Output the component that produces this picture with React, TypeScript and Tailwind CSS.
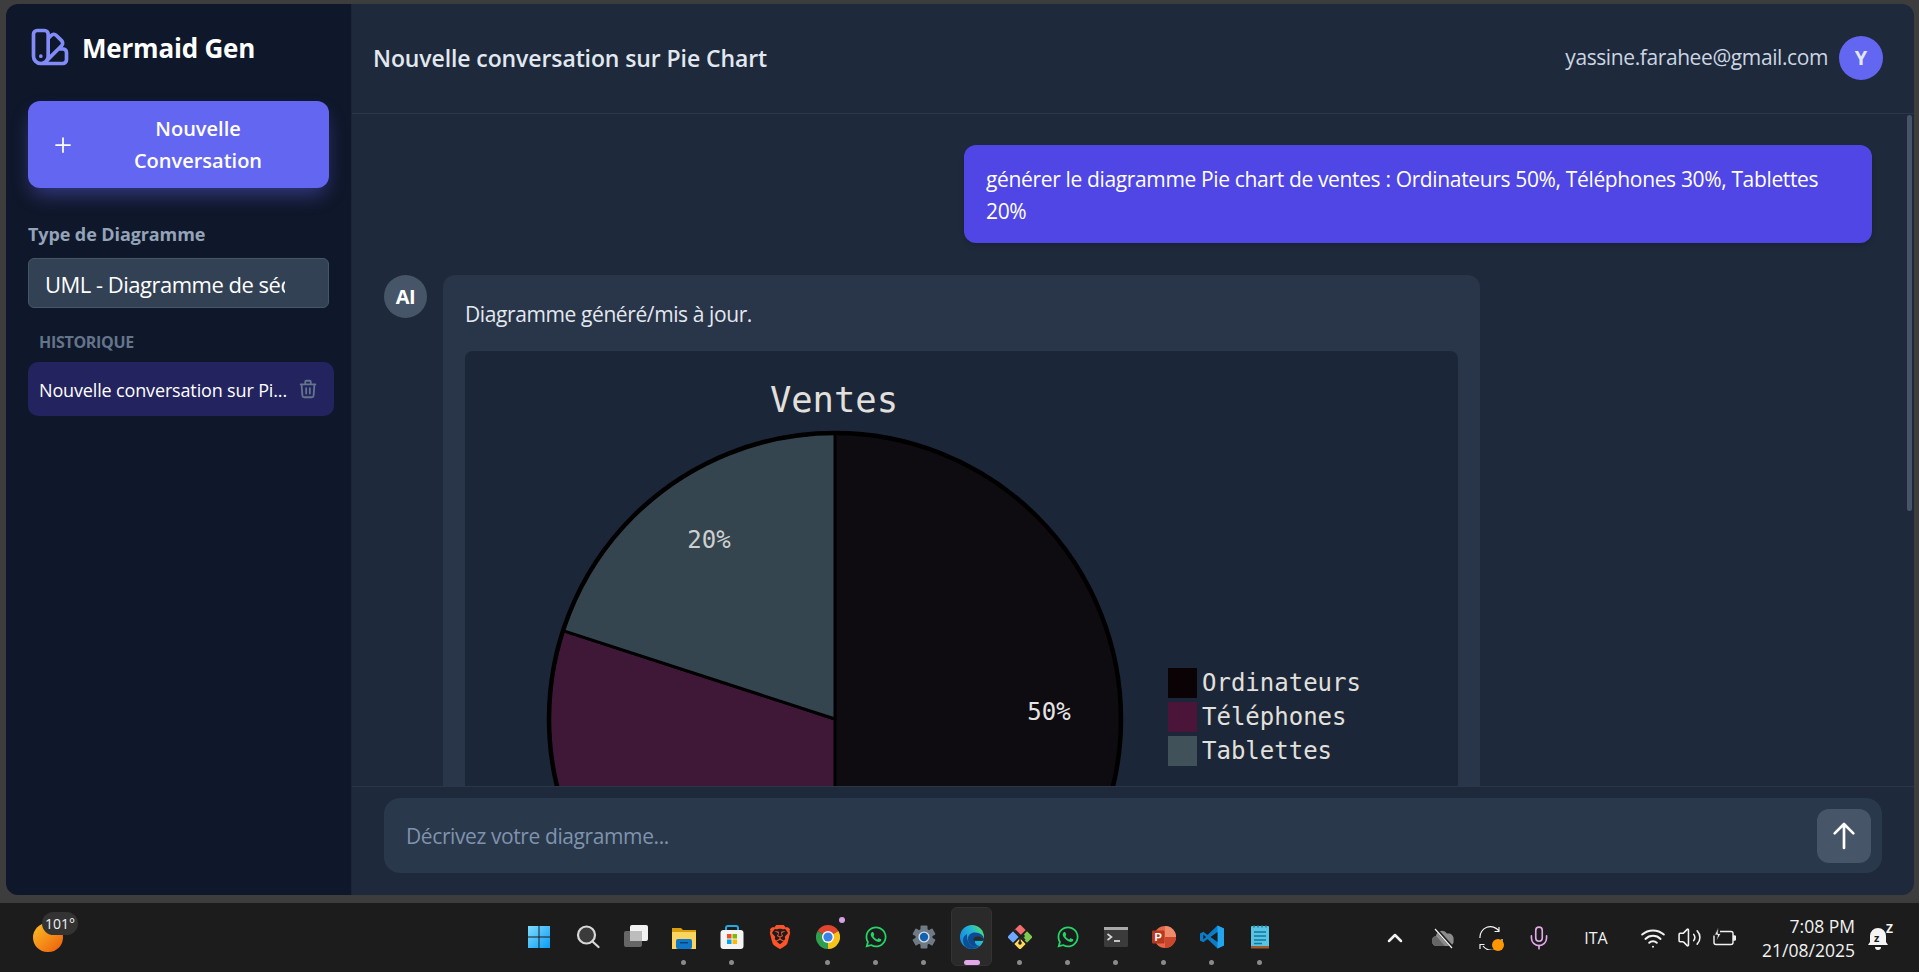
import { ChevronUp, Mic, Plus, Volume2, Wifi } from "lucide-react";
import { FaWhatsapp } from "react-icons/fa";
import { SiBrave } from "react-icons/si";

function Swatch() {
  return (
    <svg viewBox="0 0 24 24" fill="none" stroke="#818cf8" strokeWidth="2" strokeLinecap="round" strokeLinejoin="round" className="w-11 h-11 shrink-0">
      <path d="M7 21a4 4 0 01-4-4V5a2 2 0 012-2h4a2 2 0 012 2v12a4 4 0 01-4 4zm0 0h12a2 2 0 002-2v-4a2 2 0 00-2-2h-2.343M11 7.343l1.657-1.657a2 2 0 012.828 0l2.829 2.829a2 2 0 010 2.828l-8.486 8.486M7 17h.01" />
    </svg>
  );
}

function Trash() {
  return (
    <svg viewBox="0 0 24 24" fill="none" stroke="#64748b" strokeWidth="2" strokeLinecap="round" strokeLinejoin="round" className="w-[22px] h-[22px] shrink-0">
      <path d="M19 7l-.867 12.142A2 2 0 0116.138 21H7.862a2 2 0 01-1.995-1.858L5 7m5 4v6m4-6v6m1-10V4a1 1 0 00-1-1h-4a1 1 0 00-1 1v3M4 7h16" />
    </svg>
  );
}

function PieChart() {
  const cx = 370;
  const cy = 368;
  const r = 286;
  const ex = cx - r * 0.951;
  const ey = cy - r * 0.309;
  const bx = cx - r * 0.951;
  const by = cy + r * 0.309;
  return (
    <svg viewBox="0 0 993 720" className="block w-[993px] h-[720px]">
      <text x="369" y="61" textAnchor="middle" fontFamily="DejaVu Sans Mono" fontSize="35.5" fill="#e2e0dc">Ventes</text>
      <path d={`M${cx} ${cy}L${cx} ${cy - r}A${r} ${r} 0 0 1 ${cx} ${cy + r}Z`} fill="#0e0b11" stroke="#000" strokeWidth="2" />
      <path d={`M${cx} ${cy}L${cx} ${cy + r}A${r} ${r} 0 0 1 ${bx} ${by}A${r} ${r} 0 0 1 ${ex} ${ey}Z`} fill="#3e1836" stroke="#000" strokeWidth="3" />
      <path d={`M${cx} ${cy}L${ex} ${ey}A${r} ${r} 0 0 1 ${cx} ${cy - r}Z`} fill="#34454f" stroke="#000" strokeWidth="3" />
      <circle cx={cx} cy={cy} r={r} fill="none" stroke="#000" strokeWidth="4.5" />
      <text x="244" y="197" textAnchor="middle" fontFamily="DejaVu Sans Mono" fontSize="24" fill="#cfcfcf">20%</text>
      <text x="584" y="369" textAnchor="middle" fontFamily="DejaVu Sans Mono" fontSize="24" fill="#e4e4e4">50%</text>
      <rect x="703" y="317" width="29" height="30" fill="#0b0206" />
      <rect x="703" y="351" width="29" height="30" fill="#4a1539" />
      <rect x="703" y="385" width="29" height="30" fill="#405159" />
      <text x="737" y="340" fontFamily="DejaVu Sans Mono" fontSize="24" fill="#e2e0dc">Ordinateurs</text>
      <text x="737" y="374" fontFamily="DejaVu Sans Mono" fontSize="24" fill="#e2e0dc">Téléphones</text>
      <text x="737" y="408" fontFamily="DejaVu Sans Mono" fontSize="24" fill="#e2e0dc">Tablettes</text>
    </svg>
  );
}

function WinIcon() {
  return (
    <svg viewBox="0 0 24 24" className="w-6 h-6 -ml-[3px]">
      <defs>
        <linearGradient id="win" x1="0" y1="0" x2="1" y2="1">
          <stop offset="0" stopColor="#7fdcff" />
          <stop offset="1" stopColor="#0a9cf5" />
        </linearGradient>
      </defs>
      <path d="M1 1h10.500v10.500H1zM12.500 1H23v10.500H12.500zM1 12.500h10.500V23H1zM12.500 12.500H23V23H12.500z" fill="url(#win)" />
    </svg>
  );
}

function SearchIcon() {
  return (
    <svg viewBox="0 0 24 24" className="w-6 h-6" fill="#3b3b3b" stroke="#d8d8d8" strokeWidth="2.2" strokeLinecap="round">
      <circle cx="10.500" cy="10" r="8.500" />
      <path d="M16.500 16.500l6 5.500" />
    </svg>
  );
}

function TaskViewIcon() {
  return (
    <svg viewBox="0 0 24 24" className="w-6 h-6">
      <rect x="0" y="6" width="18" height="16" rx="2" fill="#666" />
      <rect x="6" y="0" width="18" height="16" rx="2" fill="#f2f2f2" />
      <rect x="6" y="6" width="12" height="10" fill="#bdbdbd" />
    </svg>
  );
}

function ExplorerIcon() {
  return (
    <svg viewBox="0 0 24 24" className="w-6 h-6">
      <path d="M0 3h9l2 2h13v19H0z" fill="#d99f0e" />
      <path d="M0 7h24v17H0z" fill="#fbd35f" />
      <rect x="4" y="14" width="16" height="10" rx="2" fill="#0f77c8" />
      <rect x="8" y="17" width="8" height="1.400" fill="#063f70" />
    </svg>
  );
}

function StoreIcon() {
  return (
    <svg viewBox="0 0 24 24" className="w-6 h-6">
      <path d="M6 6V3a2 2 0 012-2h8a2 2 0 012 2v3" fill="none" stroke="#22a8e6" strokeWidth="2" />
      <rect x="0.500" y="5" width="23" height="19" rx="3" fill="#f4f4f4" />
      <rect x="7" y="9" width="4.500" height="4.500" fill="#f25022" />
      <rect x="12.500" y="9" width="4.500" height="4.500" fill="#7fba00" />
      <rect x="7" y="14.500" width="4.500" height="4.500" fill="#00a4ef" />
      <rect x="12.500" y="14.500" width="4.500" height="4.500" fill="#ffb900" />
    </svg>
  );
}

function ChromeIcon() {
  return (
    <svg viewBox="0 0 24 24" className="w-6 h-6">
      <path d="M12 12L1.600 6A12 12 0 0122.400 6Z" fill="#e0452f" />
      <path d="M12 12L22.400 6A12 12 0 0112 24Z" fill="#f6c31c" />
      <path d="M12 12L12 24A12 12 0 011.600 6Z" fill="#2f9e4f" />
      <circle cx="12" cy="12" r="6" fill="#fff" />
      <circle cx="12" cy="12" r="4.600" fill="#3b82e8" />
    </svg>
  );
}

function GearIcon() {
  return (
    <svg viewBox="0 0 24 24" className="w-6 h-6">
      {[0, 60, 120, 180, 240, 300].map((a) => (
        <rect key={a} x="8.500" y="0.500" width="7" height="6" rx="1" fill="#6f7a85" transform={`rotate(${a} 12 12)`} />
      ))}
      <circle cx="12" cy="12" r="8.500" fill="#6f7a85" />
      <circle cx="12" cy="12" r="5.600" fill="#d6dde3" />
      <circle cx="12" cy="12" r="4.200" fill="#1262b3" />
    </svg>
  );
}

function EdgeIcon() {
  return (
    <svg viewBox="0 0 24 24" className="w-6 h-6">
      <defs>
        <linearGradient id="edge" x1="0.100" y1="0.600" x2="0.900" y2="0.100">
          <stop offset="0" stopColor="#1a8fdc" />
          <stop offset="0.550" stopColor="#22b4d8" />
          <stop offset="1" stopColor="#52dc6c" />
        </linearGradient>
      </defs>
      <circle cx="12" cy="12" r="12" fill="url(#edge)" />
      <path d="M7 11c0 7 5 12 12 10.500A12 12 0 0112 24C6 24 3 20 3 15c0-3 2-5 4-6z" fill="#0b4f96" />
      <path d="M8 14c0-4 3-6.500 7-6.500 5 0 9 3 9 7 0 1-1 1.500-3 1.500h-6c-.5 2 1 4.500 4.500 5-1.500 1-3 1-5 .5-4-1-6.500-4-6.500-7.500z" fill="#0d4a8f" />
      <path d="M24 15.500H14c-1 0-1-2 .5-3 2-1.500 5-1.500 7 0 1.500 1 2.500 1.800 2.500 3z" fill="#2a2a2a" />
    </svg>
  );
}

function GitIcon() {
  return (
    <svg viewBox="0 0 24 24" className="w-6 h-6">
      <rect x="8" y="1" width="8" height="8" fill="#f26d6d" transform="rotate(45 12 5)" />
      <rect x="15" y="8" width="8" height="8" fill="#7ec850" transform="rotate(45 19 12)" />
      <rect x="8" y="15" width="8" height="8" fill="#ffd95e" transform="rotate(45 12 19)" />
      <rect x="1" y="8" width="8" height="8" fill="#6fa8ff" transform="rotate(45 5 12)" />
      <path d="M7 5l10 10M12 12v7" stroke="#222" strokeWidth="1.500" />
      <circle cx="15" cy="11" r="1.800" fill="#222" />
      <circle cx="12" cy="18" r="1.800" fill="#222" />
    </svg>
  );
}

function TerminalIcon() {
  return (
    <svg viewBox="0 0 24 24" className="w-6 h-6">
      <rect x="0" y="2" width="24" height="20" rx="1.500" fill="#3b3b3b" />
      <rect x="0" y="2" width="24" height="3" fill="#a8a8a8" />
      <path d="M3.500 9l4 3-4 3" fill="none" stroke="#d8d8d8" strokeWidth="1.600" />
      <path d="M10 16h6" stroke="#e8e8e8" strokeWidth="1.600" />
    </svg>
  );
}

function PptIcon() {
  return (
    <svg viewBox="0 0 24 24" className="w-6 h-6">
      <circle cx="13" cy="12" r="11" fill="#e4684a" />
      <path d="M13 1a11 11 0 0111 11H13z" fill="#f08a6c" />
      <path d="M13 12h11a11 11 0 01-11 11z" fill="#c9472c" />
      <rect x="0" y="5.500" width="12.500" height="13" rx="1" fill="#b5391f" />
      <text x="6.200" y="16" textAnchor="middle" fontFamily="Liberation Sans" fontSize="11" fontWeight="700" fill="#fff">P</text>
    </svg>
  );
}

function VsCodeIcon() {
  return (
    <svg viewBox="0 0 24 24" className="w-6 h-6">
      <path d="M17.500 0.500L24 3.500v17l-6.500 3-10-9.500-4.200 3.200L0 15.500v-7l3.300-1.700L7.500 10z" fill="#0a7cc8" />
      <path d="M17.500 0.500L24 3.500v17l-6.500 3z" fill="#22a5ef" />
      <path d="M17.500 7L10.500 12l7 5z" fill="#1c1c1c" />
      <path d="M3.300 9.500v5L6 12z" fill="#1c1c1c" />
    </svg>
  );
}

function NotepadIcon() {
  return (
    <svg viewBox="0 0 24 24" className="w-6 h-6">
      <rect x="3" y="1" width="18" height="22" rx="1" fill="#58c3e3" />
      <rect x="3" y="21" width="18" height="2.500" fill="#a15a2b" />
      <path d="M6 7h12M6 11h12M6 15h12M6 18.500h8" stroke="#12789f" strokeWidth="1.500" />
      <path d="M6 0v2.500M10 0v2.500M14 0v2.500M18 0v2.500" stroke="#0f6c90" strokeWidth="1.200" />
    </svg>
  );
}

function CloudOff() {
  return (
    <svg viewBox="0 0 24 24" className="w-6 h-6">
      <path d="M6 20a5 5 0 01-1-9.900 6 6 0 0111-2.600A5.500 5.500 0 0122.500 14a5 5 0 01-3.500 6z" fill="#8b8b8b" />
      <path d="M6 20a5 5 0 01-1-9.900L14 20z" fill="#666" />
      <path d="M4 2l18 20" stroke="#1c1c1c" strokeWidth="3" />
      <path d="M4 3l17 19" stroke="#f2f2f2" strokeWidth="1.200" />
    </svg>
  );
}

function SyncIcon() {
  return (
    <div className="relative w-6 h-6">
      <svg viewBox="0 0 24 24" className="w-6 h-6" fill="none" stroke="#f2f2f2" strokeWidth="1.200">
        <path d="M1 12A10.500 10.500 0 0120 5M20 1v4.500h-4.500M23 13A10.500 10.500 0 014 20M1 23v-4.500h4.500" />
      </svg>
      <span className="absolute right-[-1px] bottom-[-1px] w-3 h-3 rounded-full bg-[#ff9800]" />
    </div>
  );
}

function BatteryBolt() {
  return (
    <svg viewBox="0 0 24 24" className="w-6 h-6" fill="none" stroke="#f2f2f2" strokeWidth="1.400" strokeLinejoin="round">
      <path d="M8 5.500h11a2 2 0 012 2v9a2 2 0 01-2 2H4a2 2 0 01-2-2V9.500" />
      <path d="M21 10h1.500a1 1 0 011 1v2a1 1 0 01-1 1H21" fill="#f2f2f2" />
      <path d="M6.500 1L2.500 9h3l-1 6L9 7.500H6z" fill="#f2f2f2" stroke="#1c1c1c" strokeWidth="0.800" />
    </svg>
  );
}

function BellSnooze() {
  return (
    <div className="relative w-6 h-6">
      <svg viewBox="0 0 24 24" className="w-6 h-6" fill="#f5f5f5">
        <path d="M11 2a8 8 0 00-8 8v6l-2 3h20l-2-3v-6a8 8 0 00-8-8zM8 21h6a3 3 0 01-6 0z" />
      </svg>
      <span className="absolute left-[7px] top-[6px] text-[11px] leading-none font-bold text-[#1c1c1c]">z</span>
      <span className="absolute right-[-2px] top-[-3px] text-[12px] leading-none font-bold text-[#f5f5f5]">Z</span>
    </div>
  );
}

const apps = [
  { icon: <WinIcon />, dot: false },
  { icon: <SearchIcon />, dot: false },
  { icon: <TaskViewIcon />, dot: false },
  { icon: <ExplorerIcon />, dot: true },
  { icon: <StoreIcon />, dot: true },
  { icon: <SiBrave className="w-6 h-6 text-[#fb542b]" />, dot: false },
  { icon: <ChromeIcon />, dot: true, badge: true },
  { icon: <FaWhatsapp className="w-6 h-6 text-[#25d366]" />, dot: true },
  { icon: <GearIcon />, dot: true },
  { icon: <EdgeIcon />, dot: false, active: true },
  { icon: <GitIcon />, dot: true },
  { icon: <FaWhatsapp className="w-6 h-6 text-[#25d366]" />, dot: true },
  { icon: <TerminalIcon />, dot: true },
  { icon: <PptIcon />, dot: true },
  { icon: <VsCodeIcon />, dot: true },
  { icon: <NotepadIcon />, dot: true },
];

function Taskbar() {
  return (
    <div className="h-[69px] bg-[#1c1c1c] flex items-stretch text-[#f2f2f2]">
      <div className="w-[516px] shrink-0 pl-[33px] pt-[20px]">
        <div className="relative w-[30px] h-[29px] rounded-full bg-gradient-to-br from-[#fbbf24] to-[#ea580c]">
          <span className="absolute left-[9px] top-[-11px] w-[36px] h-[23px] rounded-full bg-[#333] text-[14px] leading-[23px] text-center">101°</span>
        </div>
      </div>
      <div className="flex">
        {apps.map((a, i) => (
          <div key={i} className="relative w-12 flex justify-center pt-[22px]">
            {a.active && <span className="absolute left-[3px] top-[4px] w-[41px] h-[59px] rounded-md bg-[#2a2a2a] border border-[#333]" />}
            <span className="relative">{a.icon}</span>
            {a.badge && <span className="absolute right-[7px] top-[14px] w-[6px] h-[6px] rounded-full bg-[#d9a0e6]" />}
            {a.dot && <span className="absolute left-[21px] top-[57px] w-[5px] h-[5px] rounded-full bg-[#8a8a8a]" />}
            {a.active && <span className="absolute left-[16px] top-[57px] w-4 h-[5px] rounded-full bg-[#e2a8e8]" />}
          </div>
        ))}
      </div>
      <div className="ml-[87px] flex items-center flex-1">
        <span className="w-12 flex justify-center"><ChevronUp size={24} strokeWidth={2.5} /></span>
        <span className="w-12 flex justify-center"><CloudOff /></span>
        <span className="w-12 flex justify-center"><SyncIcon /></span>
        <span className="w-12 flex justify-center"><Mic size={26} strokeWidth={1.500} className="text-[#e2a8e8]" /></span>
        <span className="w-[66px] text-center text-[16px]">ITA</span>
        <span className="w-9 ml-[6px] flex justify-center"><Wifi size={26} strokeWidth={1.800} /></span>
        <span className="w-9 flex justify-center"><Volume2 size={25} strokeWidth={1.500} /></span>
        <span className="w-[34px] flex justify-center"><BatteryBolt /></span>
        <div className="w-[114px] text-right text-[17.5px] leading-[24px]">
          <div>7:08 PM</div>
          <div>21/08/2025</div>
        </div>
        <span className="ml-[12px]"><BellSnooze /></span>
      </div>
    </div>
  );
}

export default function App() {
  return (
    <div className="h-[972px] w-[1919px] overflow-hidden flex flex-col bg-[#3d3d3d] font-['Open_Sans',sans-serif]">
      <div className="flex-1 min-h-0 pt-[4px] pb-[8px] pl-[6px] pr-[5px]">
        <div className="h-full flex rounded-xl overflow-hidden">
          <aside className="w-[345px] shrink-0 bg-[#0f172a] px-[22px] pt-[25px] flex flex-col">
            <div className="flex items-center gap-[10px] h-[36px]">
              <Swatch />
              <span className="text-[26px] pt-[2px] font-bold text-white tracking-[-0.2px]">Mermaid Gen</span>
            </div>
            <button className="mt-[36px] w-[301px] h-[87px] rounded-xl bg-[#6366f1] shadow-[0_10px_20px_-4px_rgba(99,102,241,0.45)] flex items-center text-white pl-[23px] pr-[8px]">
              <Plus size={24} strokeWidth={1.750} className="shrink-0" />
              <span className="flex-1 text-center text-[20px] leading-[32px] font-semibold">Nouvelle<br />Conversation</span>
            </button>
            <div className="mt-[34px] text-[18px] leading-[24px] font-bold text-[#94a3b8] tracking-[-0.1px]">Type de Diagramme</div>
            <div className="mt-[12px] w-[301px] h-[50px] rounded-md bg-[#334155] border border-[#475569] flex items-center pl-[16px] pt-[2px] text-[22px] text-white">
              <span className="block w-[240px] overflow-hidden whitespace-nowrap tracking-[-0.5px]">UML - Diagramme de séquence</span>
            </div>
            <div className="mt-[23px] ml-[11px] text-[16px] leading-[22px] font-bold text-[#64748b] tracking-[-0.3px]">HISTORIQUE</div>
            <div className="mt-[9px] w-[306px] h-[54px] rounded-[10px] bg-[#23235f] flex items-center pl-[11px] pr-[15px]">
              <span className="flex-1 text-[18px] pt-[3px] text-white whitespace-nowrap tracking-[-0.15px]">Nouvelle conversation sur Pi...</span>
              <Trash />
            </div>
          </aside>
          <main className="flex-1 min-w-0 bg-[#1e293b] flex flex-col border-l border-[#1b2536]">
            <header className="h-[110px] shrink-0 border-b border-[#2b3749] flex items-center justify-between pl-[21px] pr-[31px]">
              <h1 className="text-[23px] font-semibold text-[#e2e8f0] tracking-[-0.1px]">Nouvelle conversation sur Pie Chart</h1>
              <div className="flex items-center gap-[11px] -mt-[2px]">
                <span className="text-[21px] text-[#cbd5e1] tracking-[-0.4px]">yassine.farahee@gmail.com</span>
                <span className="w-11 h-11 rounded-full bg-[#6366f1] flex items-center justify-center text-[20px] font-bold text-[#e2e8f0]">Y</span>
              </div>
            </header>
            <div className="relative flex-1 min-h-0 overflow-hidden pl-[32px] pr-[42px] pt-[31px]">
              <span className="absolute right-[2px] top-[1px] w-[5px] h-[396px] rounded-full bg-[#475569]" />
              <div className="ml-auto w-[908px] h-[98px] rounded-xl bg-[#4f46e5] shadow-md pl-[22px] pr-[30px] pt-[18px] text-[21px] leading-[32px] text-white tracking-[-0.35px]">
                générer le diagramme Pie chart de ventes : Ordinateurs 50%, Téléphones 30%, Tablettes 20%
              </div>
              <div className="mt-[32px] flex gap-[16px] items-start">
                <span className="w-[43px] h-[43px] shrink-0 rounded-full bg-[#475569] flex items-center justify-center text-[20px] font-bold text-white tracking-[-0.5px]">AI</span>
                <div className="w-[1037px] rounded-xl bg-[#293548] p-[22px]">
                  <p className="text-[21px] leading-[34px] text-[#e2e8f0] tracking-[-0.4px]">Diagramme généré/mis à jour.</p>
                  <div className="mt-[20px] w-[993px] rounded-lg bg-[#1c2639] overflow-hidden">
                    <PieChart />
                  </div>
                </div>
              </div>
            </div>
            <div className="h-[109px] shrink-0 border-t border-[#2b3749] pl-[32px] pr-[32px] pt-[11px]">
              <div className="h-[75px] rounded-2xl bg-[#2a384b] flex items-center pl-[22px] pr-[11px]">
                <span className="flex-1 pt-[2px] text-[21px] text-[#7f93ad] tracking-[-0.4px]">Décrivez votre diagramme...</span>
                <span className="w-[54px] h-[54px] rounded-xl bg-[#475569] flex items-center justify-center">
                  <svg viewBox="0 0 24 24" fill="none" stroke="#fff" strokeWidth="2" strokeLinecap="round" strokeLinejoin="round" className="w-8 h-8">
                    <path d="M5 10l7-7m0 0l7 7m-7-7v18" />
                  </svg>
                </span>
              </div>
            </div>
          </main>
        </div>
      </div>
      <Taskbar />
    </div>
  );
}
